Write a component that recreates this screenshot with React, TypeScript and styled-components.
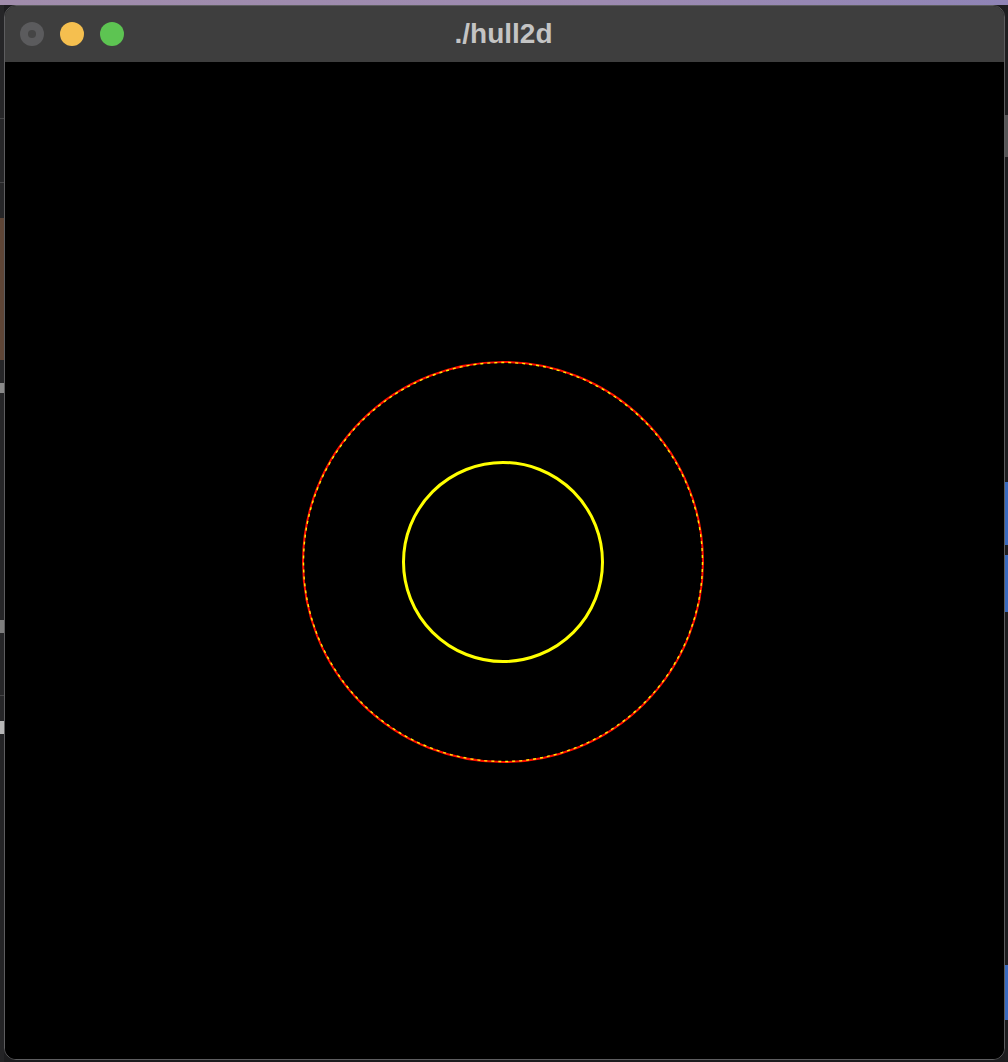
import React from "react";
import styled, { createGlobalStyle } from "styled-components";

const Global = createGlobalStyle`
  html, body { margin: 0; padding: 0; background: #1c1c1c; }
  body { font-family: "Liberation Sans", Arial, sans-serif; overflow: hidden; }
`;

const Desktop = styled.div`
  width: 1008px;
  height: 1062px;
  display: grid;
  grid-template-columns: 4px 1001px 3px;
  grid-template-rows: 5px 1055px 2px;
  background: #1d1d1f;
`;

const Wallpaper = styled.div`
  grid-column: 1 / -1;
  grid-row: 1;
  background: linear-gradient(90deg, #a08cab 0%, #9c8ab0 60%, #8f84b6 100%);
`;

const SideStrip = styled.div<{ $side: "left" | "right" }>`
  grid-column: ${(p) => (p.$side === "left" ? 1 : 3)};
  grid-row: 2 / span 2;
  display: flex;
  flex-direction: column;
  overflow: hidden;
  background: ${(p) => (p.$side === "left" ? "#262628" : "#1e1e20")};
`;

const StripBlock = styled.div<{ $h: number; $c: string }>`
  flex: 0 0 ${(p) => p.$h}px;
  background: ${(p) => p.$c};
`;

const Window = styled.div`
  grid-column: 2;
  grid-row: 2;
  display: flex;
  flex-direction: column;
  border: 1px solid #5d5d5f;
  border-radius: 12px;
  overflow: hidden;
  background: #000;
`;

const TitleBar = styled.div`
  flex: 0 0 56px;
  position: relative;
  display: flex;
  align-items: center;
  justify-content: center;
  background: #3e3e3e;
`;

const Lights = styled.div`
  position: absolute;
  left: 15px;
  top: 16px;
  display: flex;
  gap: 16px;
`;

const Light = styled.div<{ $c: string; $dot?: boolean }>`
  width: 24px;
  height: 24px;
  border-radius: 50%;
  background: ${(p) => p.$c};
  display: flex;
  align-items: center;
  justify-content: center;
  &::after {
    content: "";
    display: ${(p) => (p.$dot ? "block" : "none")};
    width: 8px;
    height: 8px;
    border-radius: 50%;
    background: #454545;
  }
`;

const Title = styled.div`
  font-family: "Liberation Sans", Arial, sans-serif;
  font-weight: 700;
  font-size: 28px;
  color: #c4c4c4;
  transform: translateX(-1px);
`;

const Canvas = styled.div`
  flex: 1;
  background: #000;
  display: flex;
`;

const leftBlocks: [number, string][] = [
  [113, "#262628"],
  [1, "#444446"],
  [63, "#262628"],
  [1, "#444446"],
  [35, "#262628"],
  [142, "#5e4536"],
  [23, "#262628"],
  [10, "#8a8a8a"],
  [227, "#262628"],
  [13, "#7e7e7e"],
  [62, "#262628"],
  [1, "#444446"],
  [25, "#262628"],
  [13, "#b8b8b8"],
  [330, "#242426"],
];

const rightBlocks: [number, string][] = [
  [110, "#1e1e20"],
  [42, "#555557"],
  [325, "#1e1e20"],
  [63, "#3a6bbf"],
  [10, "#1e1e20"],
  [57, "#3a6bbf"],
  [353, "#1e1e20"],
  [55, "#3a6bbf"],
  [49, "#1e1e20"],
];

export default function App() {
  const cx = 498;
  const cy = 500;
  return (
    <>
      <Global />
      <Desktop>
        <Wallpaper />
        <SideStrip $side="left">
          {leftBlocks.map(([h, c], i) => (
            <StripBlock key={i} $h={h} $c={c} />
          ))}
        </SideStrip>
        <SideStrip $side="right">
          {rightBlocks.map(([h, c], i) => (
            <StripBlock key={i} $h={h} $c={c} />
          ))}
        </SideStrip>
        <Window>
          <TitleBar>
            <Lights>
              <Light $c="#5b5b5d" $dot />
              <Light $c="#f5bf4f" />
              <Light $c="#5dc452" />
            </Lights>
            <Title>./hull2d</Title>
          </TitleBar>
          <Canvas>
            <svg width="999" height="997" viewBox="0 0 999 997">
              <circle
                cx={cx}
                cy={cy}
                r={200}
                fill="none"
                stroke="#ff1000"
                strokeWidth={2}
              />
              <circle
                cx={cx}
                cy={cy}
                r={199.5}
                fill="none"
                stroke="#ffee00"
                strokeWidth={1.4}
                strokeDasharray="3 4"
              />
              <circle
                cx={cx}
                cy={cy}
                r={99.5}
                fill="none"
                stroke="#ffff00"
                strokeWidth={3}
              />
            </svg>
          </Canvas>
        </Window>
      </Desktop>
    </>
  );
}
